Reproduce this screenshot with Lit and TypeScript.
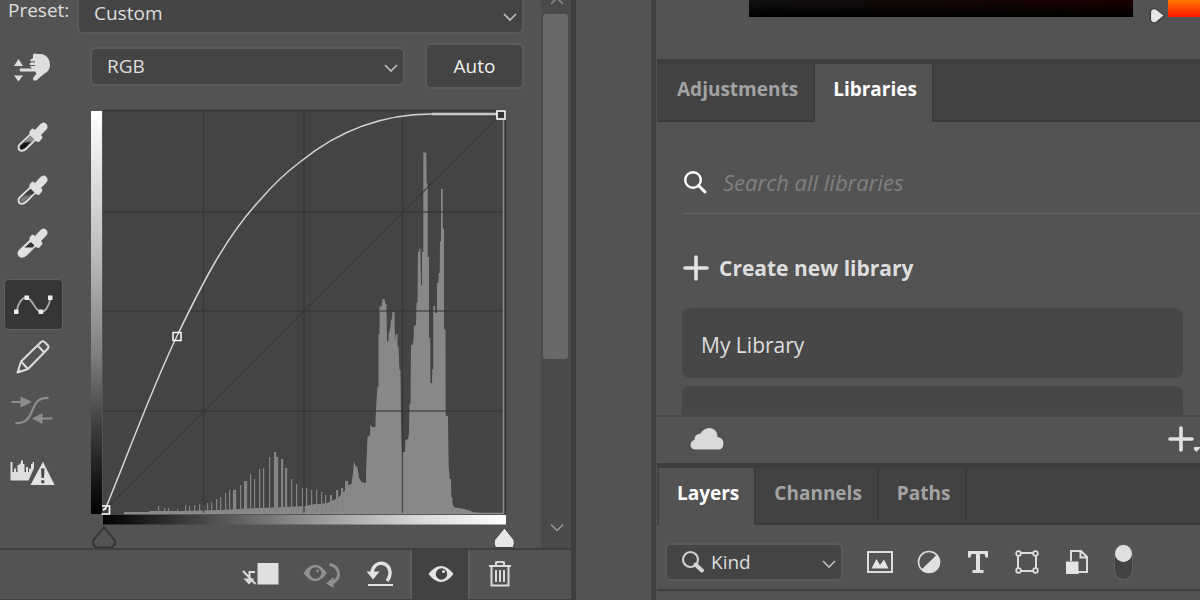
import { LitElement, html, svg, css } from "lit";
import { customElement, state } from "lit/decorators.js";
import { classMap } from "lit/directives/class-map.js";

/* Thin bars of the histogram: x, top, width. */
const SPIKES: number[][] = [
  [158, 506, 1], [164, 508, 1], [168, 508, 1], [177, 509, 1], [185, 505, 1], [189, 506, 1],
  [194, 505, 1], [199, 504, 1], [203, 505, 1], [207, 503, 1], [211, 502, 1], [216, 499, 1],
  [220, 497, 1], [225, 493, 1], [229, 490, 1], [233, 490, 3], [240, 485, 1], [244, 481, 3],
  [250, 474, 1], [254, 479, 1], [259, 469, 1], [263, 468, 1], [269, 457, 1], [274, 452, 2],
  [276, 457, 2], [281, 459, 2], [285, 468, 2], [291, 479, 1], [296, 484, 1], [302, 488, 1],
  [306, 488, 1], [311, 490, 1], [316, 490, 1], [321, 492, 1], [325, 495, 1], [330, 495, 2],
  [336, 490, 2], [341, 488, 2],
];

/* Outline of the solid part of the histogram. */
const MASS =
  "124,514 124,512 148,512 150,511 180,511 220,510 240,509 262,508 285,507 305,506 315,504 320,504 " +
  "327,503 334,500 338,498 343,492 345,491 345,481 348,481 348,485 351.5,484 353,473 354,461 355.5,466 " +
  "357.5,467 359,478 361.5,482 366,483 366,473 367.5,437 370,435 370.5,424 372,427 375.5,427 375.5,420 " +
  "376.5,400 377.5,387 378.5,387 378.5,334 379.5,334 379.5,306 381.5,307 382.5,299 384.5,299 385.5,304 " +
  "386.5,304 387,342 388.5,341 388.5,334 390,330 391,320 392,319 392.5,312 394.5,312 395,341 396,334 " +
  "397.5,334 397.5,346 398.5,347 399.5,370 400.5,370 401,420 402,452 405,452 405.5,440 408,439 409,433 " +
  "409.5,405 410.5,403 411,345 412.5,345 413.5,340 414,326 416,325 416.5,303 417.5,302 418,252 419,252 " +
  "419.5,248 420.5,249 421,285 422,285 422,252 423.3,252 423.3,152.5 426.3,152.5 426.7,183 427.7,185 " +
  "427.7,257 429,257 429,338 430.3,338 430.3,383 432,383 432.3,369 433.3,369 433.3,306 435,306 435.3,313 " +
  "437,313 437,283 438.3,283 438.7,273 439.7,273 440,242 441,241 441,189 442.7,189 442.7,228 444,229 " +
  "444,329 445.5,330 445.7,416 448,416 448.7,466 449.7,479 451,479 451.3,497 452.3,497 452.7,505 455,507.5 " +
  "464,509 471,511 472,512 482,513 482,514";

const dropper = (tube: string, shade: string, body = "none") => svg`
  <svg class="icon" width="36" height="36" viewBox="0 0 36 36">
    <path d="M17.5 13.5 22.5 18.500 11.500 29.500 Q9 32 6 31.800 Q3.200 31 3.500 27.800 Q3.800 26.300 5 25.200 Z"
      fill="${body}" stroke="#dedede" stroke-width="1.800"/>
    <path d="M16.500 16.500 20.500 19 17.500 22.500 9.500 22.500 Z" fill="${shade}"/>
    <path d="M9 24.300 15.500 23.200 10.500 28.300 Q8 30.600 5.700 29.700 Q4.400 28 6 26.500 Z" fill="${tube}"/>
    <path d="M14.500 11.500 16.500 9.300 18 8.500 20 10 25.300 4.200 Q28.300 1.300 31.200 3.700 Q34 6.800 31.200 9.800
      L26 15 27.500 17 27 18.500 24 22 21.500 21.500 14.500 14.500 Z" transform="translate(0 1)" fill="#e0e0e0"/>
  </svg>`;

const chevron = svg`
  <svg class="chevron" width="14" height="10" viewBox="0 0 14 10" aria-hidden="true">
    <path d="M1 2 7 8 13 2" fill="none" stroke="#bdbdbd" stroke-width="1.600"/>
  </svg>`;

const ICONS = {
  hand: svg`<svg class="icon" width="40" height="32" viewBox="0 0 40 32">
    <path d="M1 13 5.500 6 10 13 Z M1 22.500H10L5.500 28.500Z" fill="#dedede"/>
    <path d="M7.300 15.500H19L17.500 14 16.600 10.500 18 9.500 17.300 6.500 20 5.300 20 1.500 Q21 .3 22.700 .7 L30 1.300
      Q37 4 37 12 Q37 18 31 21 Q27 24 23.500 27.500 L20.500 27.500 19.800 25.500 23.500 20.500 22 18.500
      7.300 18.500 Q5.800 17 7.300 15.500 Z" fill="#dedede"/>
    <path d="M16 8.900H22M16.500 12.600H22" stroke="#535353" stroke-width="1"/>
  </svg>`,
  curve: svg`<svg class="icon" width="40" height="24" viewBox="0 0 40 24">
    <path d="M3.500 19C5 10 9 4.500 13.500 4.500 19 4.500 22.500 19 28 19 32 19 36 14 37.500 5"
      fill="none" stroke="#a8a8a8" stroke-width="1.800"/>
    <path d="M1 16.500h4.500V21H1zM11.500 2.500H16V7h-4.500zM25.700 16.500h4.500V21h-4.500zM35 2.500h4.500V7H35z" fill="#ececec"/>
  </svg>`,
  pencil: svg`<svg class="icon" width="36" height="36" viewBox="0 1 36 36">
    <path d="M2.500 33.500 6 22.500 26 3 Q27.700 1.700 29.500 3 L33 6.500 Q34 8.200 32.700 9.800 L13 30 Z
      M22.500 6.500 29.200 13.200M6 22.500 13 30" fill="none" stroke="#dcdcdc" stroke-width="2" stroke-linejoin="round"/>
    <path d="M2 34 3.500 29.500 7 33Z" fill="#dcdcdc"/>
  </svg>`,
  smooth: svg`<svg class="icon" width="44" height="30" viewBox="1 1.500 44 30">
    <path d="M1.500 7.500H13M31 24H42.500" stroke="#8d8d8d" stroke-width="1.800"/>
    <path d="M10.500 2 22 7.500 10.500 13ZM32.500 18.500 22 24 32.500 29.500Z" fill="#8d8d8d"/>
    <path d="M5.500 28.500C16 29 19 24 22.500 15.500 25.500 8 28 3 38.500 3.300" fill="none" stroke="#8d8d8d" stroke-width="2.200"/>
  </svg>`,
  warning: svg`<svg class="icon" width="46" height="28" viewBox="0 0 46 28">
    <path d="M.5 3H2.500V13H4V9.500H6V13H7.500V6H9.500V4.500H11V1.500H13V5H14.500V13H16V8H18V13H19V9.500H21V5H22.500V3H24V9
      L18.500 21.500H.5Z" fill="#dedede"/>
    <path d="M33 1.500 45.500 26.500H19.500Z" fill="#e4e4e4" stroke="#535353" stroke-width="1.200"/>
    <path d="M31 9.500H34.500L34 19H31.500ZM31.300 21.300H34.300V24.300H31.300Z" fill="#484848"/>
  </svg>`,
  clip: svg`<svg class="icon" width="40" height="28" viewBox="0 1 40 28">
    <rect x="17.500" y="3" width="21" height="21.500" fill="#e0e0e0"/>
    <path d="M3 11 15.500 24M15 12H9.500V22" fill="none" stroke="#dcdcdc" stroke-width="2"/>
    <path d="M3.500 18.500H14.500L9 24.500Z" fill="#dcdcdc"/>
  </svg>`,
  previous: svg`<svg class="icon" width="40" height="28" viewBox="-2 1 40 28">
    <path d="M1.500 13Q13 -3.500 25 13 13 29.500 1.500 13Z" fill="#8f8f8f"/>
    <circle cx="13.500" cy="13" r="5.800" fill="#535353"/><circle cx="15.500" cy="11" r="1.400" fill="#8f8f8f"/>
    <path d="M27.500 4.500Q36.500 6 36.500 15 36 20 30 23" fill="none" stroke="#8f8f8f" stroke-width="3"/>
    <path d="M24 23.500 31.500 17 31.500 28Z" fill="#8f8f8f"/>
  </svg>`,
  reset: svg`<svg class="icon" width="32" height="30" viewBox="-1 1 32 30">
    <path d="M7 13.500C8 6.500 13 3.500 18 4.500 25 6 27.500 15 22 22" fill="none" stroke="#e2e2e2" stroke-width="3.400"/>
    <path d="M1.500 12.500H14.500L8 20.500Z" fill="#e2e2e2"/><path d="M3 26H28" stroke="#e2e2e2" stroke-width="2"/>
  </svg>`,
  eye: svg`<svg class="icon" width="28" height="20" viewBox="-1 1 28 20">
    <path d="M1.500 10Q14 -6 26.500 10 14 26 1.500 10Z" fill="#e4e4e4"/>
    <circle cx="14.500" cy="10" r="5.700" fill="#424242"/><circle cx="16.500" cy="7.500" r="1.500" fill="#e4e4e4"/>
  </svg>`,
  trash: svg`<svg class="icon" width="24" height="28" viewBox="0 1 24 28">
    <path d="M1 6H23M8 5.500V2.500Q12 .8 16 2.500V5.500M3.500 6.500V25.500H20.500V6.500M8 10V22M12 10V22M16 10V22"
      fill="none" stroke="#dcdcdc" stroke-width="2"/>
  </svg>`,
  cloud: svg`<svg class="icon" width="34" height="24" viewBox="0 0 34 24">
    <path d="M5 22.500Q.5 22 .5 17.500 1 13.500 4.500 13 4 7.500 10.500 6.500 14 1 20 1 27.500 2 27.500 10 33.500 11 33.500 16.500
      33 22 29 22.500Z" fill="#dadada"/>
  </svg>`,
  image: svg`<svg class="icon" width="26" height="22" viewBox="0 0 26 22">
    <rect x="1" y="1" width="24" height="20" fill="none" stroke="#dcdcdc" stroke-width="2"/>
    <path d="M4.500 17.500 9.500 8 13 14 17 8.500 21.500 17.500Z" fill="#e4e4e4"/>
  </svg>`,
  adjust: svg`<svg class="icon" width="24" height="24" viewBox="0 0 24 24">
    <circle cx="12" cy="12" r="10.500" fill="none" stroke="#dcdcdc" stroke-width="1.600"/>
    <path d="M20 4.500A10.700 10.700 0 0 1 4.500 19.500Z" fill="#e0e0e0"/>
  </svg>`,
  type: svg`<svg class="icon" width="22" height="24" viewBox="0 0 22 24">
    <path d="M1 1H21V7.500H18.500L17.500 4H13V20H16.500V23H5.500V20H9V4H4.500L3.500 7.500H1Z" fill="#e0e0e0"/>
  </svg>`,
  shape: svg`<svg class="icon" width="24" height="24" viewBox="0 0 24 24">
    <path d="M3 3H21V21H3Z" fill="none" stroke="#dcdcdc" stroke-width="2"/>
    <g fill="#535353" stroke="#dcdcdc" stroke-width="1.800"><circle cx="3.500" cy="3.500" r="2.300"/>
    <circle cx="20.500" cy="3.500" r="2.300"/><circle cx="3.500" cy="20.500" r="2.300"/><circle cx="20.500" cy="20.500" r="2.300"/></g>
  </svg>`,
  smart: svg`<svg class="icon" width="24" height="26" viewBox="-1 0 24 26">
    <path d="M6 12V2H16L22 8V23H13M15.500 2V8.500H22" fill="none" stroke="#dcdcdc" stroke-width="2"/>
    <rect x="1" y="12.500" width="12.500" height="12.500" fill="#e4e4e4"/>
  </svg>`,
  plus: svg`<svg class="icon" width="26" height="26" viewBox="0 0 26 26">
    <path d="M13 2V24M2 13H24" stroke="#e2e2e2" stroke-width="3.600" stroke-linecap="round"/>
  </svg>`,
  search: svg`<svg class="icon" width="24" height="24" viewBox="0 0 24 24">
    <circle cx="10" cy="10" r="7.800" fill="none" stroke="#fff" stroke-width="2.400"/>
    <path d="M15.500 15.500 22 22" stroke="#fff" stroke-width="3" stroke-linecap="round"/>
  </svg>`,
};

const shared = css`
  * { box-sizing: border-box; }
  button, select, input {
    font: inherit;
    color: inherit;
    margin: 0;
    padding: 0;
    border: 0;
    background: none;
    border-radius: 0;
    appearance: none;
    outline: none;
  }
  button { display: flex; align-items: center; justify-content: center; }
  svg { display: block; flex: none; }
  .field { display: grid; align-items: center; min-width: 0; }
  .field > * { grid-area: 1 / 1; }
  .field select {
    width: 100%;
    border: 2px solid #5a5a5a;
    border-radius: 6px;
    background: #444;
    padding-left: 15px;
  }
  .chevron { justify-self: end; margin-right: 7px; margin-top: 4px; pointer-events: none; }
`;

@customElement("curves-panel")
class CurvesPanel extends LitElement {
  static styles = [
    shared,
    css`
      :host {
        display: grid;
        grid-template-rows: minmax(0, 1fr) 52px;
        min-width: 0;
        height: 100%;
        border-right: 5px solid #3e3e3e;
        color: #dedede;
        font-size: 19px;
      }
      .body { display: grid; grid-template-columns: minmax(0, 1fr) 30px; min-height: 0; }
      .content { padding-right: 17px; overflow: hidden; }
      .preset { display: flex; align-items: flex-start; }
      .preset label { flex: none; width: 77px; padding-left: 8px; line-height: 20px; }
      .preset .field { flex: 1; }
      .preset select { height: 34px; border-top: 0; border-radius: 0 0 6px 6px; padding-bottom: 6px; }
      .preset .chevron { margin-top: 0; }
      .main { display: grid; grid-template-columns: 66px minmax(0, 1fr); column-gap: 24px; margin-top: 9px; }
      .tools { display: flex; flex-direction: column; align-items: center; }
      .tool { width: 59px; height: 51px; margin: 1px 0; border-radius: 5px; }
      .tool.apart { margin-top: 10px; }
      .tool.first { margin: 0 0 16px; }
      .tool.on { background: #363636; border: 1px solid #606060; }
      .channel { display: flex; align-items: center; gap: 20px; }
      .channel .field { flex: 1; }
      .channel select { height: 39px; }
      .auto { width: 99px; height: 46px; border: 2px solid #5a5a5a; border-radius: 6px; background: #444; color: #f0f0f0; }
      .graph { width: 100%; height: auto; margin-top: 19px; }
      .scroll {
        display: flex;
        flex-direction: column;
        align-items: center;
        background: #4a4a4a;
        padding-left: 1px;
        overflow: hidden;
      }
      .arrow { height: 14px; }
      .arrow.down { height: 20px; margin: auto 0 10px; }
      .thumb { flex: 0 0 63%; width: 25px; margin-right: 3px; border-radius: 3px; background: #696969; }
      .bar {
        display: flex;
        justify-content: flex-end;
        border-top: 2px solid #3f3f3f;
        border-bottom: 1px solid #3f3f3f;
        padding-right: 41px;
      }
      .bar button { width: 60px; height: 100%; }
      .bar .on { background: #424242; border: solid #5e5e5e; border-width: 0 2px; }
    `,
  ];

  @state() tool = "curve";

  private toolButton(id: string, label: string, icon: unknown, extra = "") {
    const on = this.tool === id;
    return html`<button
      class=${classMap({ tool: true, on, first: extra === "first", apart: extra === "apart" })}
      aria-label=${label}
      aria-pressed=${on}
      @click=${() => (this.tool = id)}
    >${icon}</button>`;
  }

  private graph() {
    return svg`<svg class="graph" viewBox="90 108 434 440" role="img" aria-label="Tone curve">
      <defs>
        <linearGradient id="out" x2="0" y2="1"><stop offset="0" stop-color="#fff"/><stop offset=".35" stop-color="#bdbdbd"/>
          <stop offset=".6" stop-color="#808080"/><stop offset=".8" stop-color="#383838"/><stop offset="1" stop-color="#000"/></linearGradient>
        <linearGradient id="in"><stop offset="0" stop-color="#000"/><stop offset=".25" stop-color="#484848"/>
          <stop offset=".5" stop-color="#909090"/><stop offset=".8" stop-color="#dcdcdc"/><stop offset="1" stop-color="#fff"/></linearGradient>
      </defs>
      <rect x="91" y="111" width="11" height="403" fill="url(#out)"/>
      <rect x="103" y="110" width="403" height="405" fill="#444"/>
      <polygon points="${MASS}" fill="#888"/>
      ${SPIKES.map(([x, y, w]) => svg`<rect x="${x}" y="${y}" width="${w + 0.2}" height="${514 - y}" fill="#848484"/>`)}
      <path d="M203.500 111V514M304 111V514M402.500 111V514M103 212H504M103 311H504M103 411H504"
        stroke="#333" stroke-opacity=".7" stroke-width="1.500"/>
      <path d="M105 510 500 115" stroke="#353535" stroke-opacity=".7" stroke-width="1.500"/>
      <path d="M103 110.500H506M505.500 110V514" stroke="#353535" stroke-width="1.500"/>
      <path d="M503.500 120V514M124 513.500H504" stroke="#8c8c8c" stroke-width="1.500"/>
      <path d="M105 510C130 449 152 388 177 336 202 284 225 238 260 200 272 186 288 171 300 162 338 131 380 114 432 114H497"
        fill="none" stroke="#d6d6d6" stroke-width="1.500"/>
      <path d="M432 114H497" stroke="#c8c8c8" stroke-width="2.500"/>
      <rect x="497" y="111" width="8" height="8" fill="#333" stroke="#fff" stroke-width="1.600"/>
      <rect x="173" y="332.500" width="8" height="8" fill="none" stroke="#fff" stroke-width="1.500"/>
      <path d="M102 506H109.500V514H101.500M103 510 106 508" fill="none" stroke="#fff" stroke-width="1.600"/>
      <rect x="103" y="515" width="403" height="9.500" fill="url(#in)"/>
      <path d="M104 527.500 93.500 540Q92 545 96 547.500H112Q116.500 544 114.500 540Z" fill="#535353" stroke="#333" stroke-width="1.800"/>
      <path d="M504.500 528 494.500 540Q493.500 544 495.500 547.500H513Q515 544 514 540Z" fill="#e6e6e6" stroke="#444" stroke-width="1"/>
    </svg>`;
  }

  render() {
    return html`
      <div class="body">
        <div class="content">
          <div class="preset">
            <label for="preset">Preset:</label>
            <div class="field">
              <select id="preset"><option>Custom</option></select>
              ${chevron}
            </div>
          </div>
          <div class="main">
            <div class="tools">
              ${this.toolButton("target", "On-image adjustment", ICONS.hand, "first")}
              ${this.toolButton("black", "Set black point", dropper("#111", "#8c8c8c"))}
              ${this.toolButton("grey", "Set grey point", dropper("#777", "#3c3c3c"))}
              ${this.toolButton("white", "Set white point", dropper("#e4e4e4", "#333", "#e4e4e4"))}
              ${this.toolButton("curve", "Edit points", ICONS.curve, "apart")}
              ${this.toolButton("pencil", "Draw curve", ICONS.pencil)}
              ${this.toolButton("smooth", "Smooth curve", ICONS.smooth)}
              ${this.toolButton("warning", "Calculate histogram", ICONS.warning, "apart")}
            </div>
            <div>
              <div class="channel">
                <div class="field">
                  <select aria-label="Channel"><option>RGB</option></select>
                  ${chevron}
                </div>
                <button class="auto">Auto</button>
              </div>
              ${this.graph()}
            </div>
          </div>
        </div>
        <div class="scroll">
          <svg class="arrow" width="14" height="14" viewBox="0 0 14 14"><path d="M1 4 7 -2 13 4" fill="none" stroke="#8c8c8c" stroke-width="1.500"/></svg>
          <div class="thumb"></div>
          <svg class="arrow down" width="14" height="20" viewBox="0 0 14 20"><path d="M1 6.500 7 12.500 13 6.500" fill="none" stroke="#9a9a9a" stroke-width="1.500"/></svg>
        </div>
      </div>
      <div class="bar">
        <button aria-label="Clip to layer">${ICONS.clip}</button>
        <button aria-label="View previous state">${ICONS.previous}</button>
        <button aria-label="Reset">${ICONS.reset}</button>
        <button class="on" aria-label="Toggle visibility">${ICONS.eye}</button>
        <button aria-label="Delete">${ICONS.trash}</button>
      </div>
    `;
  }
}

@customElement("side-dock")
class SideDock extends LitElement {
  static styles = [
    shared,
    css`
      :host {
        display: grid;
        grid-template-rows: 59px 63px minmax(0, 1fr) 48px 62px 66px 9px;
        min-width: 0;
        height: 100%;
        padding-left: 1px;
        color: #dedede;
        font-size: 19px;
        overflow: hidden;
      }
      .colors { display: flex; align-items: flex-start; padding-left: 92px; }
      .ramp { flex: 1; height: 17px; background: linear-gradient(#0000, #000), linear-gradient(90deg, #111, #1c0000); }
      .pointer { margin: 7px 2px 0 16px; }
      .hue { width: 32px; height: 17px; background: linear-gradient(#ff7a00, #ff1400); }
      .tabs { display: flex; padding-left: 2px; border-top: 5px solid #3d3d3d; background: #424242; box-shadow: inset 0 -2px #3b3b3b; }
      .tab { padding: 0 15px 8px 18px; font-weight: 700; color: #a3a3a3; border-right: 2px solid #3b3b3b; }
      .tab.on { background: #535353; color: #fff; }
      .libraries { padding: 40px 0 0 25px; overflow: hidden; }
      .search { display: flex; align-items: center; gap: 16px; height: 52px; padding: 0 0 12px 1px; border-bottom: 1px solid #666; }
      .search input { flex: 1; min-width: 0; font-size: 22px; font-style: italic; }
      .search input::placeholder { color: #808080; opacity: 1; }
      .create { height: 30px; margin: 39px 0 25px; padding-left: 1px; gap: 10px; font-size: 21px; font-weight: 700; }
      .card { width: calc(100% - 17px); height: 70px; margin-bottom: 8px; padding: 4px 19px 0; justify-content: flex-start; border-radius: 8px; background: #474747; font-size: 21px; }
      .foot { display: flex; align-items: center; justify-content: space-between; padding: 0 0 3px 33px; border-top: 2px solid #484848; }
      .filter { display: flex; align-items: center; padding: 9px 8px 0; border-bottom: 2px solid #3f3f3f; }
      .kind { width: 178px; margin-right: 12px; }
      .kind select { height: 38px; padding-left: 44px; }
      .lens { margin-left: 16px; pointer-events: none; z-index: 1; }
      .filter button { width: 49px; height: 40px; }
      .toggle { width: 19px; height: 36px; margin-left: 14px; border: 1px solid #626262; border-radius: 10px; background: #424242; }
      .toggle::before { content: ""; display: block; width: 17px; height: 17px; border-radius: 50%; background: #e0e0e0; }
    `,
  ];

  @state() top = "Libraries";
  @state() bottom = "Layers";

  private tabs(names: string[], current: string, pick: (n: string) => void) {
    return html`<div class="tabs" role="tablist">
      ${names.map(
        (n) => html`<button class=${classMap({ tab: true, on: n === current })} role="tab"
          aria-selected=${n === current} @click=${() => pick(n)}>${n}</button>`
      )}
    </div>`;
  }

  render() {
    return html`
      <div class="colors">
        <div class="ramp"></div>
        <svg class="pointer" width="17" height="17" viewBox="0 0 17 17">
          <path d="M1.500 4Q3 .8 7 2L15.500 8.500 7 15.500Q3 16.500 1.500 13.500Z" fill="#e6e6e6" stroke="#3c3c3c" stroke-width="1.200"/>
        </svg>
        <div class="hue"></div>
      </div>
      ${this.tabs(["Adjustments", "Libraries"], this.top, (n) => (this.top = n))}
      <div class="libraries">
        <div class="search">
          ${ICONS.search}
          <input type="text" aria-label="Search all libraries" placeholder="Search all libraries" />
        </div>
        <button class="create">${ICONS.plus}Create new library</button>
        <button class="card">My Library</button>
        <button class="card" aria-label="Library"></button>
      </div>
      <div class="foot">
        ${ICONS.cloud}
        <button aria-label="Add content">
          ${ICONS.plus}
          <svg width="6" height="26" viewBox="0 0 6 26"><path d="M-2 21H7L2.500 26Z" fill="#dedede"/></svg>
        </button>
      </div>
      ${this.tabs(["Layers", "Channels", "Paths"], this.bottom, (n) => (this.bottom = n))}
      <div class="filter">
        <div class="field kind">
          <svg class="lens" width="24" height="24" viewBox="0 0 24 24">
            <circle cx="9.500" cy="9.500" r="7.500" fill="none" stroke="#cfcfcf" stroke-width="2.200"/>
            <path d="M14.500 14.500 21 20.500" stroke="#d6d6d6" stroke-width="4" stroke-linecap="round"/>
          </svg>
          <select aria-label="Filter type"><option>Kind</option></select>
          ${chevron}
        </div>
        <button aria-label="Pixel layers">${ICONS.image}</button>
        <button aria-label="Adjustment layers">${ICONS.adjust}</button>
        <button aria-label="Type layers">${ICONS.type}</button>
        <button aria-label="Shape layers">${ICONS.shape}</button>
        <button aria-label="Smart objects">${ICONS.smart}</button>
        <input class="toggle" type="checkbox" aria-label="Filtering" checked />
      </div>
    `;
  }
}

@customElement("app-root")
class AppRoot extends LitElement {
  static styles = css`
    :host {
      display: grid;
      grid-template-columns: 36fr 5fr 34fr;
      height: 100vh;
      overflow: hidden;
      background: #535353;
      font-family: "Open Sans", "Noto Sans", sans-serif;
    }
    .canvas { border-right: 5px solid #404040; }
  `;

  render() {
    return html`<curves-panel></curves-panel><div class="canvas"></div><side-dock></side-dock>`;
  }
}
